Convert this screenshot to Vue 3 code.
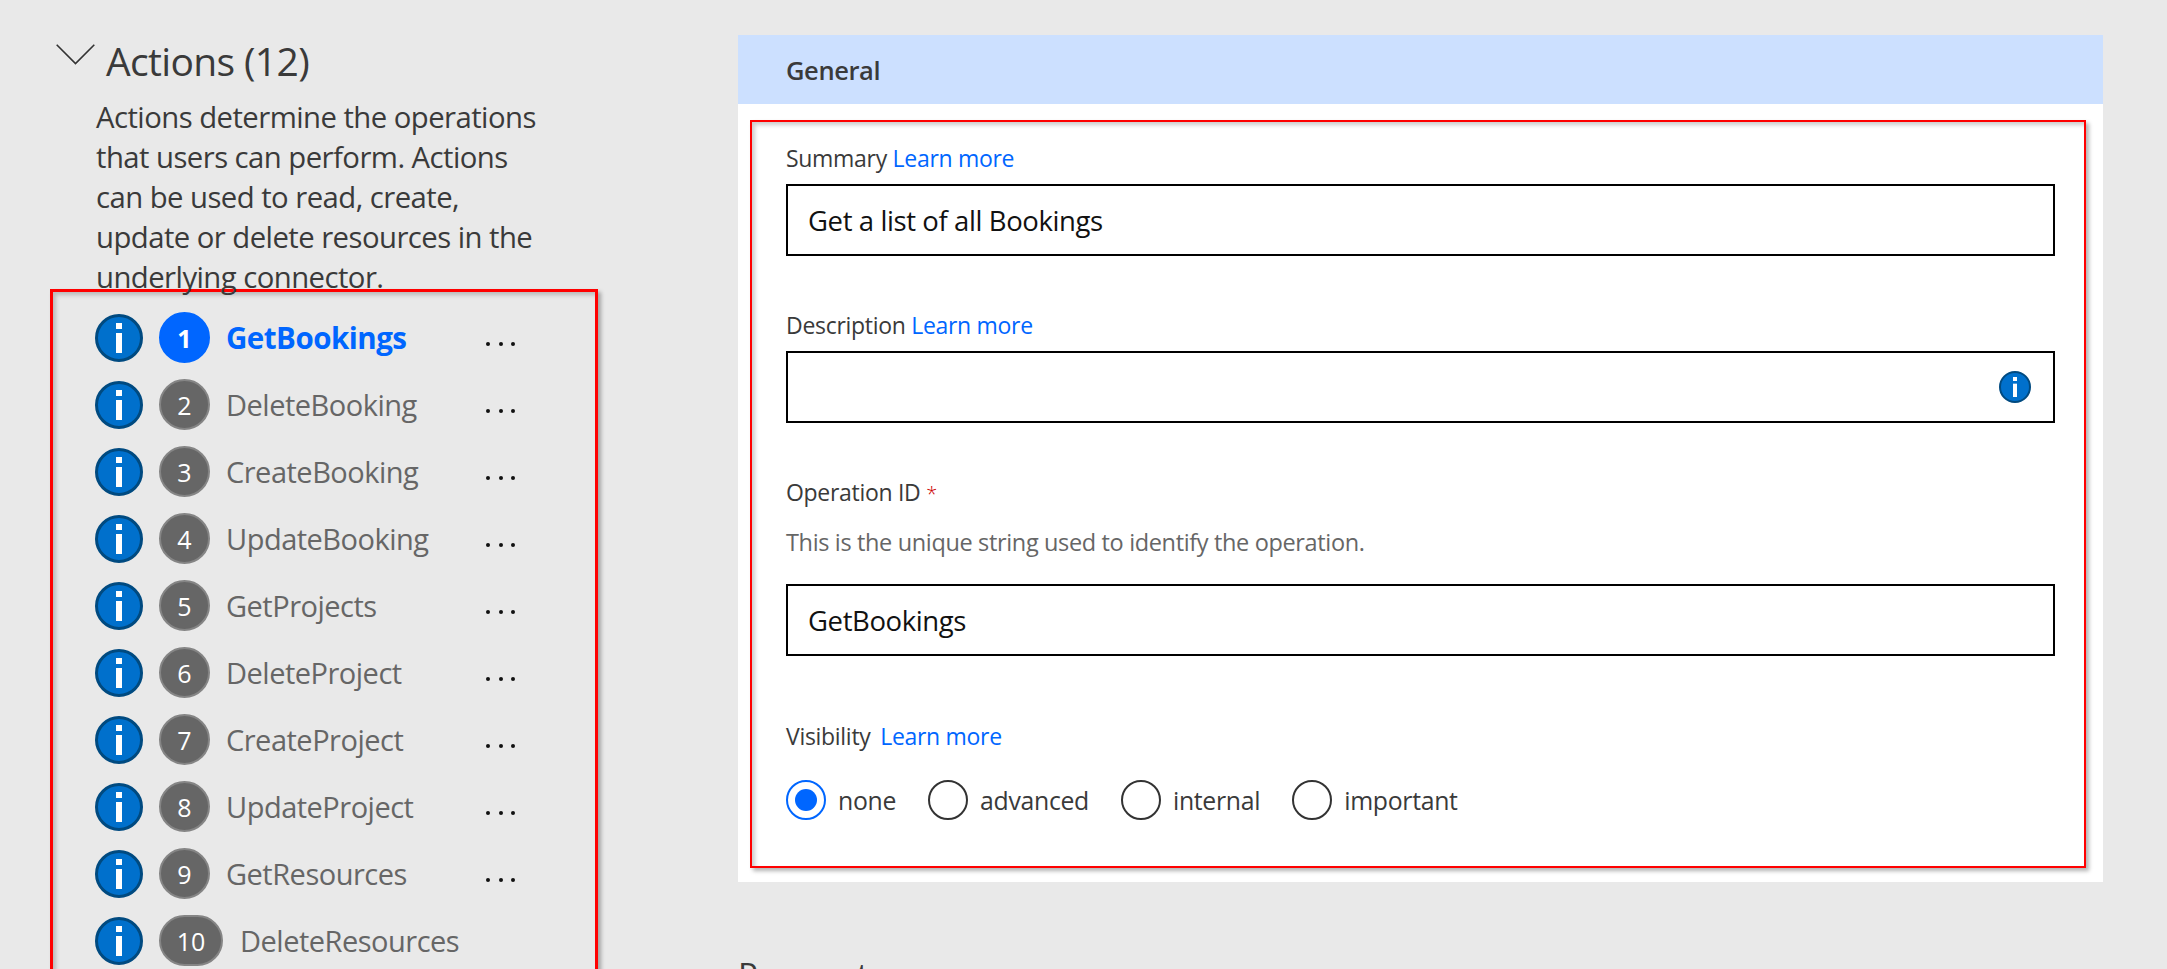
<script setup>
const actions = [
  'GetBookings', 'DeleteBooking', 'CreateBooking', 'UpdateBooking', 'GetProjects',
  'DeleteProject', 'CreateProject', 'UpdateProject', 'GetResources', 'DeleteResources'
]
const visibility = ['none', 'advanced', 'internal', 'important']
</script>

<template>
  <div class="page">
    <aside class="side">
      <div class="side-head">
        <svg class="chevron" viewBox="0 0 39 21" width="39" height="21">
          <path d="M0.7 0.7 L19.5 19.5 L38.3 0.7" fill="none" stroke="#333" stroke-width="1.6" />
        </svg>
        <h2>Actions (12)</h2>
      </div>
      <p class="side-desc">
        Actions determine the operations that users can perform. Actions can be used to read, create,
        update or delete resources in the underlying connector.
      </p>
      <ul class="action-list">
        <li v-for="(name, i) in actions" :key="name" class="action" :class="{ active: i === 0, wide: i === 9 }">
          <svg class="info" viewBox="0 0 48 48" width="48" height="48">
            <circle cx="24" cy="24" r="22.5" fill="#0070cc" stroke="#004a80" stroke-width="3" />
            <rect x="21" y="9" width="6" height="6" fill="#fff" />
            <rect x="21" y="19" width="6" height="20" fill="#fff" />
          </svg>
          <span class="num">{{ i + 1 }}</span>
          <span class="name">{{ name }}</span>
          <span v-if="i < 9" class="dots"><i></i><i></i><i></i></span>
        </li>
      </ul>
    </aside>

    <main class="main">
      <section class="panel">
        <header class="panel-head">General</header>
        <div class="panel-body">
          <div class="form">
            <label class="label">Summary <a>Learn more</a></label>
            <div class="input">Get a list of all Bookings</div>

            <label class="label second">Description <a>Learn more</a></label>
            <div class="input with-icon">
              <svg viewBox="0 0 48 48" width="32" height="32">
                <circle cx="24" cy="24" r="22.5" fill="#0070cc" stroke="#004a80" stroke-width="3" />
                <rect x="21" y="9" width="6" height="6" fill="#fff" />
                <rect x="21" y="19" width="6" height="20" fill="#fff" />
              </svg>
            </div>

            <label class="label third">Operation ID <span class="req">*</span></label>
            <p class="help">This is the unique string used to identify the operation.</p>
            <div class="input">GetBookings</div>

            <label class="label fourth">Visibility <a>Learn more</a></label>
            <div class="radios">
              <div v-for="(v, i) in visibility" :key="v" class="radio" :class="{ on: i === 0 }">
                <span class="dot"></span>
                <span>{{ v }}</span>
              </div>
            </div>
          </div>
        </div>
      </section>
      <h3 class="next">Parameters</h3>
    </main>
  </div>
</template>

<style scoped>
.page {
  display: flex;
  height: 969px;
  overflow: hidden;
  background: #e9e9e9;
  font-family: "Open Sans", "Noto Sans", sans-serif;
  color: #3a3a3a;
}
.side {
  width: 738px;
  flex: none;
  box-sizing: border-box;
  padding: 36px 0 0 50px;
}
.side-head {
  display: flex;
  align-items: flex-start;
  padding-left: 6px;
}
.chevron {
  margin-top: 8px;
  flex: none;
}
.side-head h2 {
  margin: 0 0 0 11px;
  font-size: 39px;
  font-weight: 400;
  line-height: 50px;
  letter-spacing: -0.65px;
}
.side-desc {
  margin: 11px 0 0 46px;
  width: 446px;
  font-size: 29.3px;
  line-height: 40px;
  letter-spacing: -0.55px;
}
.action-list {
  list-style: none;
  margin: -8px 0 0;
  width: 548px;
  height: 690px;
  box-sizing: border-box;
  padding: 12px 0 0 42px;
  border: 3px solid #f00;
  box-shadow: 3px 3px 4px rgba(0, 0, 0, 0.3), inset 3px 3px 4px rgba(0, 0, 0, 0.2);
}
.action {
  display: flex;
  align-items: center;
  height: 67px;
  color: #666;
}
.info {
  flex: none;
}
.num {
  flex: none;
  width: 51px;
  height: 51px;
  margin-left: 16px;
  box-sizing: border-box;
  border: 2px solid #858585;
  border-radius: 26px;
  background: #666;
  color: #fff;
  font-size: 25px;
  display: flex;
  align-items: center;
  justify-content: center;
}
.action.wide .num {
  width: 64px;
}
.name {
  width: 260px;
  flex: none;
  margin-left: 16px;
  font-size: 29px;
  line-height: 40px;
  letter-spacing: -0.5px;
}
.action.wide .name {
  margin-left: 17px;
  width: auto;
}
.action.active .num {
  background: #0066ff;
  border-color: #0066ff;
  font-weight: 700;
}
.action.active .name {
  color: #0066ff;
  font-size: 29.5px;
  font-weight: 700;
}
.dots {
  display: flex;
  gap: 8.5px;
  margin-top: 12px;
}
.dots i {
  width: 4px;
  height: 4px;
  border-radius: 50%;
  background: #111;
}
.main {
  width: 1365px;
  flex: none;
  padding-top: 35px;
}
.panel {
  background: #fff;
  height: 847px;
}
.panel-head {
  height: 69px;
  box-sizing: border-box;
  padding-left: 48px;
  background: #cce0ff;
  font-size: 25.5px;
  font-weight: 600;
  line-height: 71px;
  letter-spacing: -0.4px;
}
.panel-body {
  padding: 16px 17px 0 12px;
}
.form {
  height: 748px;
  box-sizing: border-box;
  padding: 18px 29px 0 34px;
  border: 2px solid #f00;
  box-shadow: 3px 3px 4px rgba(0, 0, 0, 0.3), inset 3px 3px 4px rgba(0, 0, 0, 0.2);
}
.label {
  display: block;
  font-size: 23px;
  line-height: 36px;
  letter-spacing: -0.3px;
}
.label a {
  color: #0066ff;
}
.label.second {
  margin-top: 51px;
}
.label.third {
  margin-top: 51px;
}
.label.fourth {
  margin-top: 62px;
}
.label.fourth a {
  margin-left: 4px;
}
.req {
  color: #c00;
  font-size: 20px;
  font-weight: 300;
}
.help {
  margin: 12px 0 0;
  font-size: 23.5px;
  line-height: 36px;
  color: #666;
  letter-spacing: -0.35px;
}
.input {
  height: 72px;
  margin-top: 8px;
  box-sizing: border-box;
  border: 2px solid #000;
  padding: 0 20px;
  display: flex;
  align-items: center;
  font-size: 27.5px;
  letter-spacing: -0.4px;
  color: #111;
}
.input.with-icon {
  justify-content: flex-end;
  padding-right: 22px;
}
.help + .input {
  margin-top: 24px;
}
.radios {
  display: flex;
  margin-top: 26px;
  gap: 32px;
}
.radio {
  display: flex;
  align-items: center;
  gap: 12px;
  font-size: 24.8px;
  letter-spacing: -0.3px;
}
.dot {
  width: 40px;
  height: 40px;
  box-sizing: border-box;
  border: 2px solid #333;
  border-radius: 50%;
  display: flex;
  align-items: center;
  justify-content: center;
}
.radio.on .dot {
  border-color: #0066ff;
}
.radio.on .dot::after {
  content: "";
  width: 22px;
  height: 22px;
  border-radius: 50%;
  background: #0066ff;
}
.next {
  margin: 71px 0 0 0;
  font-size: 33px;
  font-weight: 400;
  line-height: 44px;
}
</style>
